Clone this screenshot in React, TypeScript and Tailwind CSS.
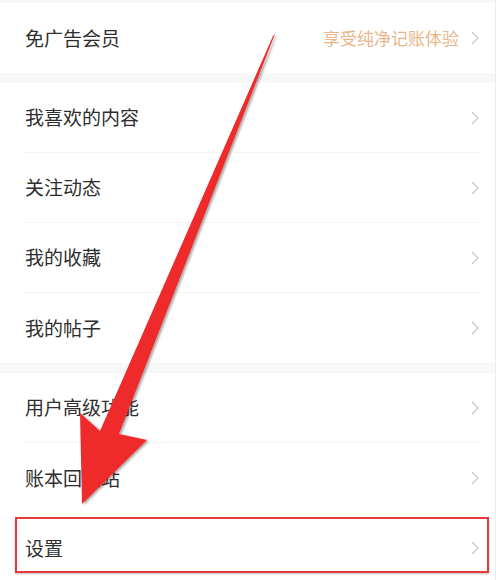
import React from 'react'

interface RowProps {
  label: string
  hint?: string
  divider?: boolean
}

function Chevron() {
  return (
    <svg width="8" height="14" viewBox="0 0 8 14" fill="none" className="shrink-0">
      <path d="M1 1l6 6-6 6" stroke="#c9c9c9" strokeWidth="1.3" />
    </svg>
  )
}

function Row({ label, hint, divider = true }: RowProps) {
  return (
    <div className="flex h-[70px] items-center bg-white pl-[25px] pr-[16px]">
      <div
        className={`flex h-full flex-1 items-center ${divider ? 'border-b border-[#f4f4f4]' : ''}`}
      >
        <span className="flex-1 text-[19px] text-[#2e2e2e]">{label}</span>
        {hint && <span className="mr-[12px] text-[17px] text-[#e8b68b]">{hint}</span>}
        <Chevron />
      </div>
    </div>
  )
}

function Arrow() {
  return (
    <svg
      className="pointer-events-none absolute left-0 top-0"
      width="496"
      height="580"
      viewBox="0 0 496 580"
    >
      <defs>
        <filter id="sh" x="-20%" y="-20%" width="140%" height="140%">
          <feDropShadow dx="2" dy="1" stdDeviation="1.2" floodColor="#000" floodOpacity="0.35" />
        </filter>
      </defs>
      <polygon
        points="275,34 119,434 147,440 82,504 80,413 100,431 273,36"
        fill="#ee2b2b"
        filter="url(#sh)"
      />
    </svg>
  )
}

export default function App() {
  return (
    <div
      className="relative h-[580px] w-[496px] overflow-hidden border-r border-[#ececec] bg-[#f7f7f7]"
      style={{ fontFamily: '"Noto Sans CJK SC", "Noto Sans", sans-serif' }}
    >
      <div className="h-[3px]" />
      <Row label="免广告会员" hint="享受纯净记账体验" divider={false} />
      <div className="h-[10px]" />
      <Row label="我喜欢的内容" />
      <Row label="关注动态" />
      <Row label="我的收藏" />
      <Row label="我的帖子" divider={false} />
      <div className="h-[10px]" />
      <Row label="用户高级功能" />
      <Row label="账本回收站" divider={false} />
      <div className="relative">
        <Row label="设置" divider={false} />
        <div className="pointer-events-none absolute left-[15px] right-[6px] top-[4px] h-[56px] border-2 border-[#e5393b] shadow-[0_1px_2px_rgba(0,0,0,0.25)]" />
      </div>
      <Arrow />
    </div>
  )
}
